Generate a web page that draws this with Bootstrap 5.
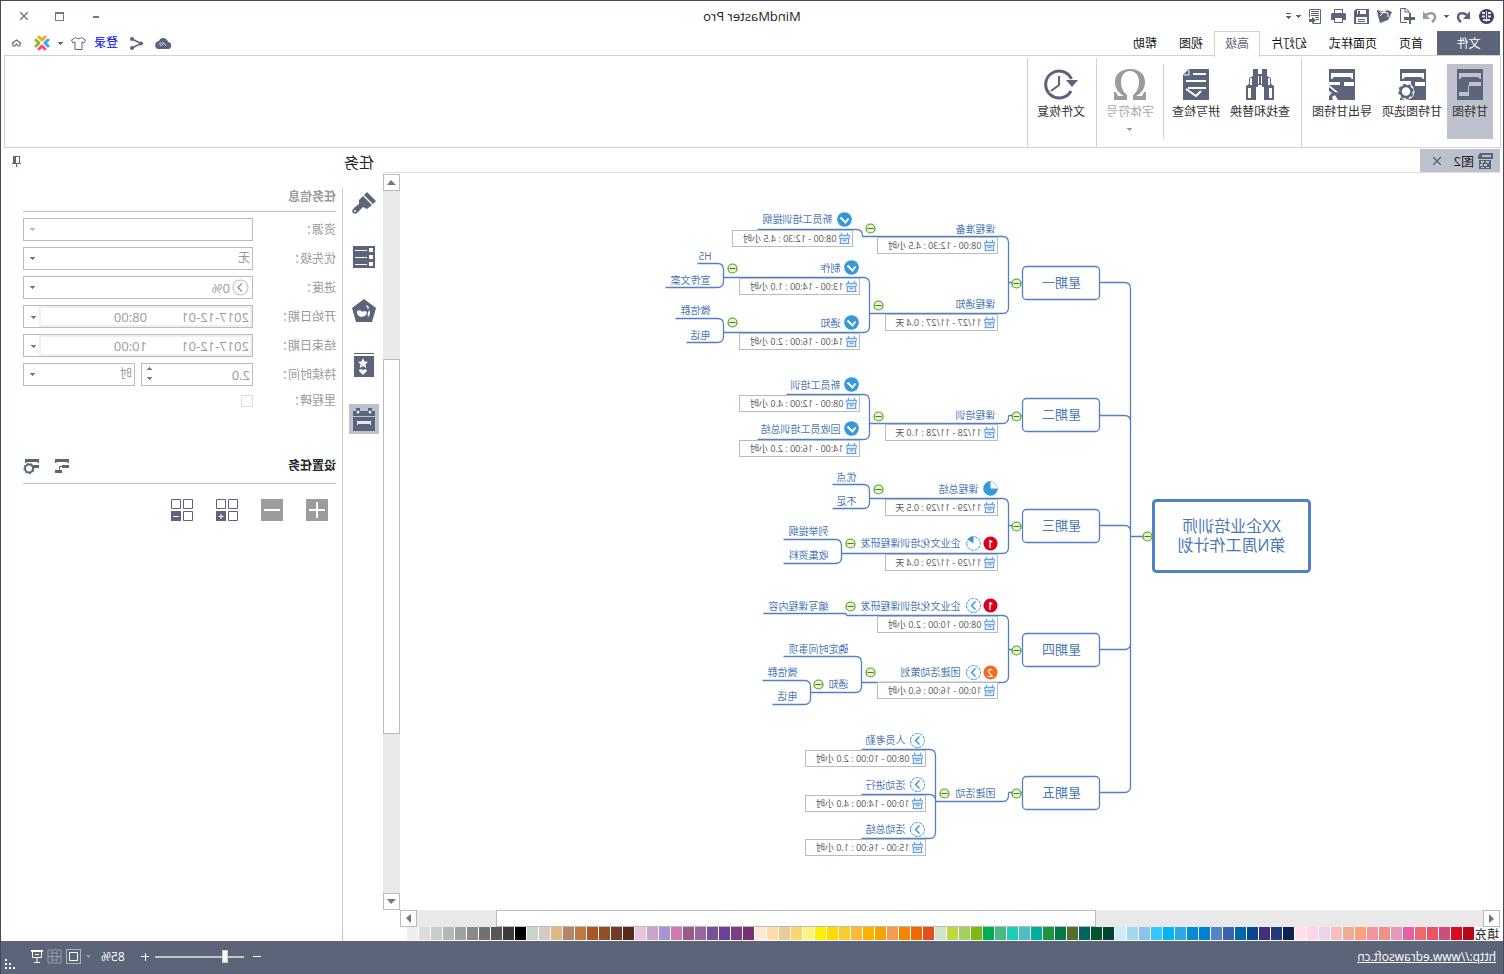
<!DOCTYPE html>
<html lang="zh-CN">
<head>
<meta charset="utf-8">
<meta name="viewport" content="width=device-width, initial-scale=1">
<title>MindMaster Pro</title>
<link href="https://cdn.jsdelivr.net/npm/bootstrap@5.3.0/dist/css/bootstrap.min.css" rel="stylesheet">
<style>
:root { --ink:#5c6479; --sel:#bdc1cd; --rule:#d2d2d2; --box:#bbbbbb; --blue:#4f81c4; }
body { font-family:"Open Sans","Noto Sans CJK SC",sans-serif; font-size:12px; line-height:16px; color:#222; background:#fff; overflow:hidden; }
/* the whole window is shown flipped left to right */
.app { transform:scaleX(-1); height:100vh; border:1px solid #43475d; border-bottom:0; background:#fff; }
button { background:none; border:0; padding:0; color:inherit; font:inherit; line-height:16px; }
svg { display:block; }
.ink { color:var(--ink); }
.titlebar { height:30px; padding:0 5px; }
.app-title { font-size:13px; }
.qbtn { width:23px; height:30px; display:flex; align-items:center; justify-content:center; color:var(--ink); }
.qdrop { width:10px; }
.qoff { color:#999; }
.wbtn { width:36px; height:30px; display:flex; align-items:center; justify-content:center; color:#777; }
.menubar { height:24px; padding-left:3px; padding-right:10px; }
.menubar .tab-btn { height:24px; padding:1px 11px 0; color:#111; }
.menubar .tab-file { width:63px; background:var(--ink); color:#fff; margin-right:3px; padding:1px 0 0; }
.menubar .tab-on { border:1px solid var(--rule); border-bottom:0; background:#fff; color:var(--ink); padding:0 10px 2px; height:26px; margin-bottom:-2px; position:relative; z-index:1; }
.menu-tools { gap:8px; }
.login-link { color:#00f; text-decoration:none; }
.ribbon { margin:0 3px 0 2px; border:1px solid var(--rule); height:93px; }
.rgroup { display:flex; border-right:1px solid var(--rule); margin-top:2px; padding:6px 4px 0 6px; }
.rgroup-lead { padding-left:7px; padding-right:5px; }
.rbtn { height:75px; padding:5px 5px 0; display:flex; flex-direction:column; align-items:center; color:#333; white-space:nowrap; }
.rbtn svg { color:var(--ink); margin-bottom:4px; }
.rbtn-on { background:var(--sel); }
.rbtn:disabled { color:#aaa; }
.rbtn:disabled svg { color:#9b9b9b; }
.rsep { width:1px; height:75px; background:var(--rule); margin:0 4px 0 3px; }
.work { margin-left:3px; min-width:0; }
.doctabs { height:25px; border-bottom:1px solid #e0e0e0; padding-top:1px; }
.doctab { width:80px; background:var(--sel); padding:0 13px 0 6px; font-size:13px; }
.sbar { background:#e9e9e9; }
.sbtn { width:17px; height:17px; background:#fff; border:1px solid var(--box); color:#777; display:flex; align-items:center; justify-content:center; flex:none; }
.vbar { width:17px; padding-top:1px; }
.hbar { height:17px; margin-right:17px; }
.thumb { background:#fff; border:1px solid var(--box); }
.palette { height:14px; }
.fill-name { width:26px; line-height:16px; padding-left:1px; white-space:nowrap; }
.swatch { width:11px; height:13px; margin-right:1px; }
.side { width:382px; flex:none; }
.side-head { height:40px; padding:0 11px 13px 9px; font-size:15px; }
.rail { width:40px; gap:24px; padding-left:4px; }
.rail button { width:30px; height:30px; display:flex; align-items:center; justify-content:center; color:var(--ink); }
.rail .rail-on { background:var(--sel); }
.panel { border-left:1px solid #c8c8c8; padding:0 22px 0 6px; color:#999; }
.sec-head { height:24px; border-bottom:1px solid #c0c0c0; font-weight:700; padding-top:1px; margin-bottom:6px; }
.sec-tasks { height:28px; margin:46px 0 0; padding-bottom:8px; align-items:center; }
.sec-tasks span { color:#222; }
.frow { height:23px; margin-bottom:6px; display:flex; align-items:center; justify-content:space-between; }
.fbox { width:230px; height:23px; position:relative; }
.fbox select, .half input, .half select { width:100%; height:23px; border:1px solid var(--box); background:#fff; color:#999; padding:0 2px 1px; font-size:12px; line-height:20px; appearance:none; border-radius:0; outline:0; display:block; }
.half { width:112px; position:relative; }
.half input { font-size:13px; padding-bottom:0; }
.darrow { position:absolute; right:7px; top:10px; color:#777; pointer-events:none; }
.darrow-off { color:#bbb; }
.spins { position:absolute; right:6px; top:4px; color:#777; }
.prog-ic { position:absolute; left:4px; top:3px; color:#b5b5b5; }
.fbox .has-ic { padding:0 22px; font-size:13px; }
.datebox { border:1px solid var(--box); display:flex; }
.dateframe { border:2px solid #efefef; width:213px; height:21px; display:flex; padding-left:1px; }
.dateframe input { border:0; padding:0; background:none; color:#999; font-size:13px; width:102px; height:17px; outline:0; }
.mile { width:12px; height:12px; appearance:none; border:1px solid #ddd; background:#fff; margin:0; }
.mile-row, .mile-row .fbox { height:18px; }
.tool-row { gap:23px; padding:15px 8px; }
.statusbar { height:33px; background:var(--ink); color:#fff; padding:0 4px 2px 7px; }
.statusbar a { color:#fff; }
.zoom { appearance:none; width:89px; height:14px; background:linear-gradient(#c4c4c4,#c4c4c4) center/100% 2px no-repeat; margin:0 6px 0 9px; padding:0; }
.zoom::-webkit-slider-thumb { appearance:none; width:6px; height:13px; background:#fff; border:1px solid #ccc; }
.zoom-drop { color:#8d93a3; margin:0 5px 0 -6px; }
.grip { margin:16px 0 0 12px; }
.stage text { fill:#4a77b4; font-size:10px; }
.stage .when { fill:#555; font-size:9px; }
.stage .day { font-size:13px; text-anchor:middle; }
.stage .core { font-size:16px; text-anchor:middle; }
.stage .num { fill:#fff; font-size:10px; font-weight:600; text-anchor:middle; }
</style>
</head>
<body>
<svg width="0" height="0" class="position-absolute" aria-hidden="true">
  <defs>
    <symbol id="down" viewBox="0 0 5 3"><path d="M0 0h5v1H4v1H3v1H2V2H1V1H0z" fill="currentColor"/></symbol>
    <symbol id="minigantt" viewBox="0 0 14 14"><path fill="currentColor" d="M0 0h14v4h-1l-1-1H2L1 4H0zM0 6h7v3H0zM7 11h7v3H7z"/><path d="M7 7.500h2.500V11" fill="none" stroke="currentColor"/></symbol>
    <symbol id="fold" viewBox="-6 -6 12 12"><circle r="4.500" fill="#e6f1de" stroke="#4ea30c" stroke-width="1.200"/><path d="M-3 0h6" stroke="#3d8a00" stroke-width="1.200"/></symbol>
    <symbol id="done" viewBox="-8 -8 16 16"><circle r="7.300" fill="#3498db"/><path d="M-4-1-1 3 4-2" fill="none" stroke="#fff" stroke-width="2"/></symbol>
    <symbol id="begin" viewBox="-8 -8 16 16"><circle r="7" fill="#fff" stroke="#2f93d6" stroke-width="1" stroke-dasharray="3 1"/><path d="M-2-4 2 0-2 4" fill="none" stroke="#2f93d6" stroke-width="1.400"/></symbol>
    <symbol id="pie75" viewBox="-8 -8 16 16"><circle r="6.800" fill="#fff" stroke="#3498db" stroke-width=".7" stroke-dasharray="2 1"/><path d="M0 0V-7.200A7.200 7.200 0 1 1-7.200 0z" fill="#3498db"/></symbol>
    <symbol id="pie10" viewBox="-8 -8 16 16"><circle r="6.800" fill="#fff" stroke="#3498db" stroke-dasharray="3 1"/><path d="M0 0V-7A7 7 0 0 1 6-4z" fill="#3498db"/></symbol>
    <symbol id="cal" viewBox="0 0 12 12"><path d="M1 3h10M1 6h10M1 11h10M3 0v3M9 0v3M1 3v2M11 3v2M2 6v5M10 6v5M4 8h4" fill="none" stroke="#6ea6e4" stroke-width="1.300"/></symbol>
  </defs>
</svg>

<div class="app d-flex flex-column">
  <header class="titlebar d-flex align-items-center">
    <div class="d-flex col">
      <button class="qbtn" aria-label="MindMaster"><svg width="15" height="15" viewBox="0 0 15 15"><circle cx="7.500" cy="7.500" r="7.500" fill="#3d4257"/><path d="M3 3h3v2H3zM9 3h3v2H9zM3 6.500h3v2H3zM9 6.500h3v2H9zM4 10h3v2H4zM8 10h3v2H8zM7 2h1v11H7z" fill="#dfe2ea"/></svg></button>
      <button class="qbtn" aria-label="撤销"><svg width="14" height="13" viewBox="0 0 14 13"><path d="M3 5c4-3 9-2 9 2q0 3-3 5" fill="none" stroke="currentColor" stroke-width="2.400"/><path d="M0 1v8h7z" fill="currentColor"/></svg></button>
      <button class="qbtn qdrop" aria-label="撤销列表"><svg width="5" height="3"><use href="#down"/></svg></button>
      <button class="qbtn qoff" aria-label="重做"><svg width="14" height="13" viewBox="0 0 14 13"><path d="M11 5C7 2 2 3 2 7q0 3 3 5" fill="none" stroke="currentColor" stroke-width="2.400"/><path d="M14 1v8H7z" fill="currentColor"/></svg></button>
      <button class="qbtn" aria-label="新建"><svg width="16" height="16" viewBox="0 0 16 16"><path d="M6 5V3.500L9 .5h5.500v14H8" fill="none" stroke="currentColor"/><path d="M6 4h4V0" fill="none" stroke="currentColor"/><path d="M0 9h4V5h2v4h5v3H6v4H4v-4H0z" fill="currentColor"/></svg></button>
      <button class="qbtn" aria-label="打开"><svg width="15" height="15" viewBox="0 0 15 15"><path d="M0 3 5 1l2 2 8-2-1 6-2 7-8-3z" fill="currentColor"/><path d="M4 8V4l8-1M9 4l3 3" fill="none" stroke="#fff"/></svg></button>
      <button class="qbtn" aria-label="保存"><svg width="15" height="15" viewBox="0 0 15 15"><path d="M0 0h13l2 2v13H0z" fill="currentColor"/><path d="M3 1h9v4H3zM2 8h11v6H2z" fill="#fff"/><path d="M9 2h2v3H9zM4 10h7v1H4zM4 12h7v1H4z" fill="currentColor"/></svg></button>
      <button class="qbtn" aria-label="打印"><svg width="15" height="14" viewBox="0 0 15 14"><path d="M3 0h9v4h2l1 1v6h-3v3H3v-3H0V5l1-1h2z" fill="currentColor"/><path d="M4 1h7v3H4zM4 9h7v4H4z" fill="#fff"/></svg></button>
      <button class="qbtn" aria-label="导出"><svg width="12" height="15" viewBox="0 0 12 15"><path d="M8 14.500H.5V.5h11v8" fill="none" stroke="currentColor"/><path d="M2 2.500h8M2 4.500h8M2 6.500h8M2 8.500h4M2 10.500h3" stroke="currentColor"/><path d="m5 11 4-3v2h3v3H9v2z" fill="currentColor"/></svg></button>
      <button class="qbtn qdrop" aria-label="更多导出"><svg width="5" height="3"><use href="#down"/></svg></button>
      <button class="qbtn qdrop" aria-label="自定义"><svg width="5" height="6" viewBox="0 0 5 6"><path d="M0 0h5v1H0zM0 3h5v1H4v1H3v1H2V5H1V4H0z" fill="currentColor"/></svg></button>
    </div>
    <div class="app-title">MindMaster Pro</div>
    <div class="d-flex col justify-content-end">
      <button class="wbtn" aria-label="最小化"><svg width="6" height="10"><path d="M0 5h6v2H0z" fill="currentColor"/></svg></button>
      <button class="wbtn" aria-label="最大化"><svg width="9" height="9"><path d="M0 0h9v9H0zM1 2v6h7V2z" fill-rule="evenodd" fill="currentColor"/></svg></button>
      <button class="wbtn" aria-label="关闭"><svg width="8" height="8"><path d="m0 0 8 8M8 0 0 8" stroke="currentColor" stroke-width="1.400"/></svg></button>
    </div>
  </header>

  <nav class="menubar d-flex align-items-start">
    <button class="tab-btn tab-file">文件</button>
    <button class="tab-btn">首页</button>
    <button class="tab-btn">页面样式</button>
    <button class="tab-btn">幻灯片</button>
    <button class="tab-btn tab-on">高级</button>
    <button class="tab-btn">视图</button>
    <button class="tab-btn">帮助</button>
    <div class="menu-tools ms-auto d-flex align-items-center h-100 ink">
      <button aria-label="云"><svg width="16" height="11" viewBox="0 0 16 11"><path d="M3.500 11a3.500 3.500 0 0 1-.5-7C4-1 11-1 12 3c5 0 5 8 1 8z" fill="currentColor"/><path d="m5 8 2-3 3 3 2-3M7 5l4 0" fill="none" stroke="#cfd3dd" stroke-width=".9"/></svg></button>
      <button class="ms-1" aria-label="分享"><svg width="13" height="13" viewBox="0 0 13 13"><path d="M11 2 2 6.500 11 11" fill="none" stroke="currentColor" stroke-width="1.500"/><circle cx="11" cy="2" r="2" fill="currentColor"/><circle cx="2" cy="6.500" r="2" fill="currentColor"/><circle cx="11" cy="11" r="2" fill="currentColor"/></svg></button>
      <a class="login-link ms-1" href="#">登录</a>
      <button aria-label="皮肤"><svg width="15" height="13" viewBox="0 0 15 13"><path d="M4.500.5q3 3 6 0L14.500 3 13 6l-2-1v7.500H4V5L2 6 .5 3z" fill="none" stroke="currentColor"/></svg></button>
      <button aria-label="皮肤列表"><svg width="5" height="3"><use href="#down"/></svg></button>
      <button aria-label="产品"><svg width="16" height="16" viewBox="0 0 16 16" fill="none" stroke-width="3" stroke-linecap="round" stroke-linejoin="round"><path d="M5 2 8 5l3-3" stroke="#f5a81c"/><path d="m5 14 3-3 3 3" stroke="#fb4a7d"/><path d="M2 5l3 3-3 3" stroke="#3aa6e6"/><path d="m14 5-3 3 3 3" stroke="#8cb82b"/></svg></button>
      <button class="ms-1" aria-label="折叠功能区"><svg width="11" height="8" viewBox="0 0 11 8"><path d="M1 4.500 5.500 1 10 4.500M2 4v3h2l1.500-2L7 7h2V4" fill="none" stroke="currentColor" stroke-width="1.100"/></svg></button>
    </div>
  </nav>

  <section class="ribbon d-flex">
    <div class="rgroup rgroup-lead">
      <button class="rbtn rbtn-on"><svg width="26" height="31"><path fill="currentColor" d="M0 0h26v31H0z"/><path d="M2 4h22v6h-1l-2-2H5l-2 2H2zM2 13h12v4H2zM14 23h10v4H14z" fill="#bdc1cd"/><path d="M12 16.500h2.500V24" stroke="#bdc1cd" fill="none"/></svg>甘特图</button>
      <button class="rbtn"><svg width="28" height="31" viewBox="0 0 28 31"><path fill="currentColor" d="M0 0h26v31H0z"/><path fill="#fff" d="M2 4h22v6h-1l-2-2H5l-2 2H2zM1 13h10v4H1zM15 12h11v4H15z"/><circle cx="20" cy="22.500" r="8.500" fill="#fff"/><circle cx="20" cy="22.500" r="5.500" fill="none" stroke="currentColor" stroke-width="2.500"/><circle cx="20" cy="22.500" r="7" fill="none" stroke="currentColor" stroke-width="1.500" stroke-dasharray="3 2.500"/></svg>甘特图选项</button>
      <button class="rbtn"><svg width="26" height="31" viewBox="0 0 26 31"><path fill="currentColor" d="M0 0h26v31H0z"/><path fill="#fff" d="M2 4h22v6h-1l-2-2H5l-2 2H2zM1 13h10v4H1zM15 13h11v3H15z"/><path d="m12 18 5 5 9-7v15h-9l3-5z" fill="#fff"/><path d="m13 20 3 4 4-1 6-5v4l-3 2 3 3v4h-4l1-3-3-2-4 3-4-6z" fill="currentColor"/></svg>导出甘特图</button>
    </div>
    <div class="rgroup">
      <button class="rbtn"><svg width="28" height="31" viewBox="0 0 28 31"><path d="M7 0h5v5h4V0h5v7l4 2v6l3 2v14H18V18h-2v-2h-4v2h-2v13H0V17l3-2V9l4-2z" fill="currentColor"/><path d="M4 9h2v7H4zM22 9h2v7h-2zM2 19h3v10H2zM23 19h3v10h-3zM12 7h1v8h-1zM15 7h1v8h-1z" fill="#fff"/></svg>查找和替换</button>
      <button class="rbtn"><svg width="26" height="31" viewBox="0 0 26 31"><path d="M0 0h20l6 6v25H0z" fill="currentColor"/><path d="M20 1v5h5" fill="none" stroke="#fff"/><path d="M3 4h13v2H3zM3 11h20v2H3zM3 18h18v2H3z" fill="#fff"/><path d="m8 22 5 5 10-7" fill="none" stroke="#fff" stroke-width="2"/></svg>拼写检查</button>
      <div class="rsep"></div>
      <button class="rbtn" disabled><svg width="32" height="31" viewBox="0 0 32 31"><path d="M0 31v-8h2l2 4h6C4 24 1 19 1 13 1 5 7 0 16 0s15 5 15 13c0 6-3 11-9 14h6l2-4h2v8H19v-5c4-3 6-8 6-13 0-6-3-11-9-11S7 7 7 13c0 5 2 10 6 13v5z" fill="currentColor"/></svg>字体符号<svg class="mt-2" width="5" height="3"><use href="#down"/></svg></button>
    </div>
    <div class="rgroup">
      <button class="rbtn"><svg width="34" height="31" viewBox="0 0 34 31"><path d="M7 22A13.500 13.500 0 1 0 6.500 10" fill="none" stroke="currentColor" stroke-width="3"/><path d="M0 11h12l-6 7z" fill="currentColor"/><path d="M19 7v9l8 6" fill="none" stroke="currentColor" stroke-width="2"/></svg>文件恢复</button>
    </div>
  </section>

  <main class="d-flex flex-fill" style="min-height:0">
    <div class="work d-flex flex-column flex-fill">
      <div class="doctabs d-flex">
        <div class="doctab d-flex align-items-center">
          <svg class="ink" width="16" height="16" viewBox="0 0 16 16"><path d="M1 0h13l2 3v3H1zM3 7h12v9H3z" fill="currentColor"/><path d="M3 2h9v2H3zM5 8h3v2H5zM10 8h3v2h-3zM7 11h3v2H7zM11 11h3v2h-3zM5 14h3v1H5zM10 14h3v1h-3z" fill="#bdc1cd"/></svg>
          <span class="ms-1">图2</span>
          <button class="ms-auto ink" aria-label="关闭图2"><svg width="8" height="8"><path d="m0 0 8 8M8 0 0 8" stroke="currentColor" stroke-width="1.400"/></svg></button>
        </div>
      </div>
      <div class="d-flex flex-fill" style="min-height:0">
        <svg class="stage flex-fill" width="100" height="100%" id="stage" role="img" aria-label="第N周工作计划"></svg>
        <div class="vbar d-flex flex-column">
          <div class="sbar d-flex flex-column flex-fill">
            <button class="sbtn" aria-label="上"><svg width="9" height="5"><path d="M0 5h9L5 0z" fill="currentColor"/></svg></button>
            <div style="flex:168"></div><div class="thumb" style="flex:375"></div><div style="flex:159"></div>
            <button class="sbtn" aria-label="下"><svg width="9" height="5"><path d="M0 0h9L5 5z" fill="currentColor"/></svg></button>
          </div>
        </div>
      </div>
      <div class="hbar sbar d-flex">
        <button class="sbtn" aria-label="左"><svg width="5" height="9"><path d="M5 0v9L0 5z" fill="currentColor"/></svg></button>
        <div style="flex:388"></div><div class="thumb" style="flex:600"></div><div style="flex:79"></div>
        <button class="sbtn" aria-label="右"><svg width="5" height="9"><path d="M0 0v9l5-5z" fill="currentColor"/></svg></button>
      </div>
      <div class="palette d-flex" id="palette"><span class="fill-name">填充</span></div>
    </div>

    <aside class="side d-flex flex-column">
      <div class="side-head d-flex align-items-center justify-content-between"><span>任务</span>
        <button class="ink" aria-label="固定"><svg width="9" height="11" viewBox="0 0 9 11"><path d="M1 0h7v7h1v1H5v3H4V8H0V7h1zM2 1v6h3V1z" fill-rule="evenodd" fill="currentColor"/></svg></button></div>
      <div class="d-flex flex-fill">
        <nav class="rail d-flex flex-column">
          <button aria-label="样式"><svg width="24" height="22" viewBox="0 0 24 22"><path d="m0 9 9-9 3 3-9 9zM4 13l9-9 4 4v4l5 4q3 3 1 5-3 2-5-1l-5-5-4 2z" fill="currentColor"/><circle cx="21" cy="19" r="1" fill="#fff"/></svg></button>
          <button aria-label="列表"><svg width="22" height="22"><path d="M0 0h22v22H0z" fill="currentColor"/><path d="M2 2h4v4H2zM2 9h4v4H2zM2 16h4v4H2zM8 4h12v1H8zM8 11h12v1H8zM8 18h12v1H8z" fill="#fff"/></svg></button>
          <button aria-label="剪贴画"><svg width="24" height="24" viewBox="0 0 24 24"><path d="m12 0 12 9-4 14H4L0 9z" fill="currentColor"/><path d="M11 17q-4-4 0-5 2 0 2 1 3-3 6-1 1 4-4 6zM7 17q-2-4 0-6 2 4 1 7zM7 9q0-2 3-3-1 3-2 4z" fill="#fff"/></svg></button>
          <button aria-label="符号"><svg width="20" height="24" viewBox="0 0 20 24"><path d="M0 0h20v1H0zM0 3h20v21H0z" fill="currentColor"/><path d="m11 5 1.500 3.500 3.500.3-2.500 2.400.7 3.800-3.200-2-3.200 2 .7-3.800L6 8.800l3.500-.3zM11 22l-4-4q0-3 4-1 4-2 4 1z" fill="#fff"/></svg></button>
          <button class="rail-on" aria-label="任务"><svg width="22" height="23" viewBox="0 0 22 23"><path d="M0 3h3V0h4v3h8V0h4v3h3v5H0zM0 9h22v14H0z" fill="currentColor"/><path d="M4 13h14v4h-1v-1H5v1H4z" fill="#e3e6ed"/><circle cx="5" cy="4" r="1.500" fill="#e3e6ed"/><circle cx="17" cy="4" r="1.500" fill="#e3e6ed"/></svg></button>
        </nav>
        <form class="panel flex-fill">
          <div class="sec-head"><span>任务信息</span></div>
          <div class="frow"><label for="res">资源：</label><div class="fbox"><select id="res"><option></option></select><svg class="darrow darrow-off" width="5" height="3"><use href="#down"/></svg></div></div>
          <div class="frow"><label for="pri">优先级：</label><div class="fbox"><select id="pri"><option>无</option></select><svg class="darrow" width="5" height="3"><use href="#down"/></svg></div></div>
          <div class="frow"><label for="pro">进度：</label><div class="fbox"><select id="pro" class="has-ic"><option>0%</option></select><svg class="prog-ic" width="17" height="17" viewBox="0 0 17 17" fill="none" stroke="currentColor"><circle cx="8.500" cy="8.500" r="7.500"/><path d="m7 4.500 4 4-4 4" stroke="#999" stroke-width="1.500"/></svg><svg class="darrow" width="5" height="3"><use href="#down"/></svg></div></div>
          <div class="frow"><label for="d1">开始日期：</label><div class="fbox datebox"><div class="dateframe"><input id="d1" value="2017-12-01"><input aria-label="开始时间" value="08:00"></div><button type="button" aria-label="选择开始日期"><svg class="darrow" width="5" height="3"><use href="#down"/></svg></button></div></div>
          <div class="frow"><label for="d2">结束日期：</label><div class="fbox datebox"><div class="dateframe"><input id="d2" value="2017-12-01"><input aria-label="结束时间" value="10:00"></div><button type="button" aria-label="选择结束日期"><svg class="darrow" width="5" height="3"><use href="#down"/></svg></button></div></div>
          <div class="frow"><label for="dur">持续时间：</label><div class="fbox d-flex justify-content-between"><div class="half"><input id="dur" value="2.0"><svg class="spins" width="5" height="13"><path d="M2 0h1v1h1v1h1v1H0V2h1V1h1zM0 10h5v1H4v1H3v1H2v-1H1v-1H0z" fill="currentColor"/></svg></div><div class="half"><select aria-label="时间单位"><option>时</option></select><svg class="darrow" width="5" height="3"><use href="#down"/></svg></div></div></div>
          <div class="frow mile-row"><label for="mil">里程碑：</label><div class="fbox d-flex align-items-center"><input type="checkbox" class="mile" id="mil"></div></div>
          <div class="sec-head sec-tasks d-flex justify-content-between ink"><span>设置任务</span>
            <div class="d-flex gap-3"><button type="button" aria-label="甘特图"><svg width="14" height="14"><use href="#minigantt"/></svg></button>
            <button type="button" aria-label="甘特图选项"><svg width="16" height="15" viewBox="0 0 16 15"><path d="M0 0h14v4h-1l-1-1H2L1 4H0zM0 6h6v3H0z" fill="currentColor"/><circle cx="10" cy="9.500" r="4" fill="#fff" stroke="currentColor" stroke-width="2"/><circle cx="10" cy="9.500" r="5.200" fill="none" stroke="currentColor" stroke-dasharray="2 2"/></svg></button></div></div>
          <div class="tool-row d-flex ink">
            <button type="button" aria-label="添加"><svg width="22" height="22"><path d="M0 0h22v22H0z" fill="#9c9c9c"/><path d="M3 11h16M11 3v16" stroke="#fff" stroke-width="2"/></svg></button>
            <button type="button" aria-label="删除"><svg width="22" height="22"><path d="M0 0h22v22H0z" fill="#9c9c9c"/><path d="M3 11h16" stroke="#fff" stroke-width="2"/></svg></button>
            <button type="button" aria-label="展开"><svg width="22" height="22" fill="none" stroke="currentColor"><path d="M.5.5h9v9h-9zM12.500.5h9v9h-9zM.5 12.500h9v9h-9z"/><path d="M12 12h10v10H12z" fill="currentColor" stroke="none"/><path d="M14.500 17.500h5M17 15v5" stroke="#fff"/></svg></button>
            <button type="button" aria-label="收起"><svg width="22" height="22" fill="none" stroke="currentColor"><path d="M.5.5h9v9h-9zM12.500.5h9v9h-9zM.5 12.500h9v9h-9z"/><path d="M12 12h10v10H12z" fill="currentColor" stroke="none"/><path d="M14 17.500h6" stroke="#fff"/></svg></button>
          </div>
        </form>
      </div>
    </aside>
  </main>

  <footer class="statusbar d-flex align-items-center">
    <a href="http://www.edrawsoft.cn">http://www.edrawsoft.cn</a>
    <div class="ms-auto d-flex align-items-center">
      <button aria-label="缩小"><svg width="8" height="8"><path d="M0 3h8v1H0z" fill="#fff"/></svg></button>
      <input class="zoom" type="range" min="0" max="100" value="19" aria-label="缩放">
      <button aria-label="放大"><svg width="8" height="8"><path d="M0 3h3V0h1v3h4v1H4v4H3V4H0z" fill="#fff"/></svg></button>
      <span class="mx-3">85%</span>
      <svg class="zoom-drop" width="5" height="3"><use href="#down"/></svg>
      <button aria-label="适合页面"><svg width="15" height="15" fill="none" stroke="#fff"><path d="M.5.5h14v14H.5z" stroke-dasharray="1 1"/><path d="M3.500 3.500h8v8h-8z"/></svg></button>
      <button class="mx-1" aria-label="适合宽度"><svg width="15" height="15" fill="none" stroke="#969cac"><path d="M1 1h13v13H1zM5 2v11M10 2v11M1 7.500h13M5 4h5M5 11h5"/></svg></button>
      <button aria-label="演示"><svg width="12" height="13" fill="none" stroke="#fff"><path d="M0 1h12" stroke-width="2"/><path d="M1.500 2v5.500h9V2M4 4.500h4M6 8v4M3 12.500h6"/></svg></button>
      <svg class="grip align-self-end" width="14" height="11" viewBox="-3 0 14 11"><path d="M9 0h2v2H9zM9 4h2v2H9zM5 4h2v2H5zM9 8h2v2H9zM5 8h2v2H5zM1 8h2v2H1z" fill="#fff"/></svg>
    </div>
  </footer>
</div>

<script>
const palette = ('b50919 db0a1e c94f7c e95465 eb6a72 e8609f e29ab8 ee9089 f3939c ffa07a f0ab95 f5bfbc e9d5e9 fed5e8 fde0e8 ' +
 '0d2350 24397a 432e7c 08478f 0068a6 3d61ae 5384c6 0080d0 038ed3 2ea8e2 00b5f2 33c9fb 8ac3eb a1d8ef cfebf6 ' +
 '00432f 00572c 006560 556d2b 007b48 1d953f 00ae9c 50bdc0 1dceb2 4ab97c 00ae52 7db910 a4d063 bed742 cde6c7 ' +
 'e34f1f ed6a00 f38600 f49b52 f1a500 ffb000 fcb933 fbcb31 ffd900 fff000 fdf284 fed472 e9cc98 ffdcab fde9d0 ' +
 '7a2f72 813d83 6a4297 765399 9668a0 9d5a88 cc7bb0 a993d1 c7a5c8 ecc3dc ' +
 '582a1b 733a2e 925029 a95729 c07940 b3866c deb887 d4cbc5 cad4cb ' +
 '000000 3e3a39 595757 727171 898989 9fa0a0 b5b6b6 cacccc dcdcdc eeeeee').split(' ');
document.getElementById('palette').insertAdjacentHTML('beforeend',
  palette.map(c => `<span class="swatch" style="background:#${c}"></span>`).join(''));

// branch: [trunk x, parent y, child y, end x]
const branches = [
 [373,536,282,404],[373,536,415,404],[373,536,525,404],[373,536,649,404],[373,536,792,404],
 [495,282,236,641],[495,282,313,634],[495,415,423,634],[495,525,498,634],[495,525,553,662],[495,649,615,657],[495,649,682,642],[495,792,801,568],
 [641,236,229,746],
 [634,313,277,780],[634,313,332,780],[780,277,263,806],[780,277,287,838],[780,332,318,828],[780,332,342,817],
 [634,423,394,717],[634,423,439,746],
 [634,498,484,671],[634,498,508,671],[662,553,539,720],[662,553,563,720],
 [657,615,613,740],[642,682,656,720],[642,682,692,693],[693,692,680,741],[693,692,704,731],
 [568,801,749,642],[568,801,794,642],[568,801,838,642]];
const labels = [
 ['课程准备',508,229],['新员工培训提纲',671,219],['制作',663,268],['H5',792,256],['宣传文案',793,280],['课程通知',508,304],
 ['通知',663,323],['微信群',793,310],['电话',793,335],
 ['课程培训',508,415],['新员工培训',663,385],['回收员工培训总结',663,429],
 ['课程总结',525,489],['优点',647,477],['不足',647,501],['企业文化培训课程研发',543,543],['列举提纲',675,531],['收集资料',675,555],
 ['企业文化培训课程研发',543,606],['编写课程内容',675,606],['团建活动策划',543,672],['确定时间事项',655,649],['通知',655,684],['微信群',706,672],['电话',706,696],
 ['团建活动',508,793],['人员考勤',598,740],['活动进行',598,785],['活动总结',598,829]];
const dates = [
 ['08:00 - 12:30 : 4.5 小时',506,237],['08:00 - 12:30 : 4.5 小时',651,230],['13:00 - 14:00 : 1.0 小时',644,278],['11/27 - 11/27 : 0.4 天',506,314],
 ['14:00 - 16:00 : 2.0 小时',644,333],['11/28 - 11/28 : 1.0 天',506,424],['08:00 - 12:00 : 4.0 小时',644,395],['14:00 - 16:00 : 2.0 小时',644,440],
 ['11/29 - 11/29 : 0.5 天',506,499],['11/29 - 11/29 : 0.4 天',506,554],['08:00 - 10:00 : 2.0 小时',506,616],['10:00 - 16:00 : 6.0 小时',506,682],
 ['08:00 - 10:00 : 2.0 小时',578,750],['10:00 - 14:00 : 4.0 小时',578,795],['15:00 - 16:00 : 1.0 小时',578,839]];
const folds = [[356,536],[487,283],[487,416],[487,526],[487,650],[487,793],[633,228],[771,268],[771,322],[625,305],[625,416],[625,489],[653,543],[653,606],[633,672],[685,684],[559,793]];
const icons = [['done',659,219],['done',652,267],['done',652,322],['done',652,384],['done',652,428],['pie75',513,488],['pie10',530,543],
 ['begin',530,605],['begin',530,672],['begin',586,740],['begin',586,784],['begin',586,829]];
const badges = [['1',513,543,'#d9001b'],['1',513,605,'#d9001b'],['2',513,672,'#f56a1d']];
const days = [['星期一',266],['星期二',398],['星期三',509],['星期四',633],['星期五',776]];

const curve = ([x, py, cy, ex]) => {
  const s = Math.sign(cy - py), r = Math.min(6, Math.abs(cy - py));
  return `M${x} ${py}V${cy - s * r}Q${x} ${cy} ${x + r} ${cy}H${ex}`;
};
const line = 'stroke="#4f81c4" stroke-width="1.300"';
document.getElementById('stage').innerHTML = `<g transform="translate(-3.5 -172.5)">
 <path fill="none" ${line} d="M360 536H373${[282,415,525,649,792].map(y => `M482 ${y}H495`).join('')}${branches.map(curve).join('')}"/>
 ${dates.map(([t, x, y]) => `<rect x="${x}" y="${y}" width="${t.includes('天') ? 112 : 120}" height="16" fill="#fff" stroke="#bbb"/>
  <use href="#cal" x="${x + 2}" y="${y + 2}" width="12" height="12"/><text class="when" x="${x + 16}" y="${y + 11}">${t}</text>`).join('')}
 <rect x="194" y="500" width="156" height="71" rx="3" fill="#fff" stroke="#4f81c4" stroke-width="3"/>
 <text class="core"><tspan x="272" y="531">XX企业培训师</tspan><tspan x="272" y="550">第N周工作计划</tspan></text>
 ${days.map(([t, y]) => `<rect x="404" y="${y}" width="77" height="33" rx="4" fill="#fff" ${line}/><text class="day" x="442" y="${y + 20}">${t}</text>`).join('')}
 ${labels.map(([t, x, y]) => `<text x="${x}" y="${y + 3}">${t}</text>`).join('')}
 ${folds.map(([x, y]) => `<use href="#fold" x="${x - 6}" y="${y - 6}" width="12" height="12"/>`).join('')}
 ${icons.map(([n, x, y]) => `<use href="#${n}" x="${x - 8}" y="${y - 8}" width="16" height="16"/>`).join('')}
 ${badges.map(([t, x, y, c]) => `<circle cx="${x}" cy="${y}" r="7" fill="${c}"/><text class="num" x="${x}" y="${y + 4}">${t}</text>`).join('')}
</g>`;
</script>
<script src="https://cdn.jsdelivr.net/npm/bootstrap@5.3.0/dist/js/bootstrap.bundle.min.js"></script>
</body>
</html>
